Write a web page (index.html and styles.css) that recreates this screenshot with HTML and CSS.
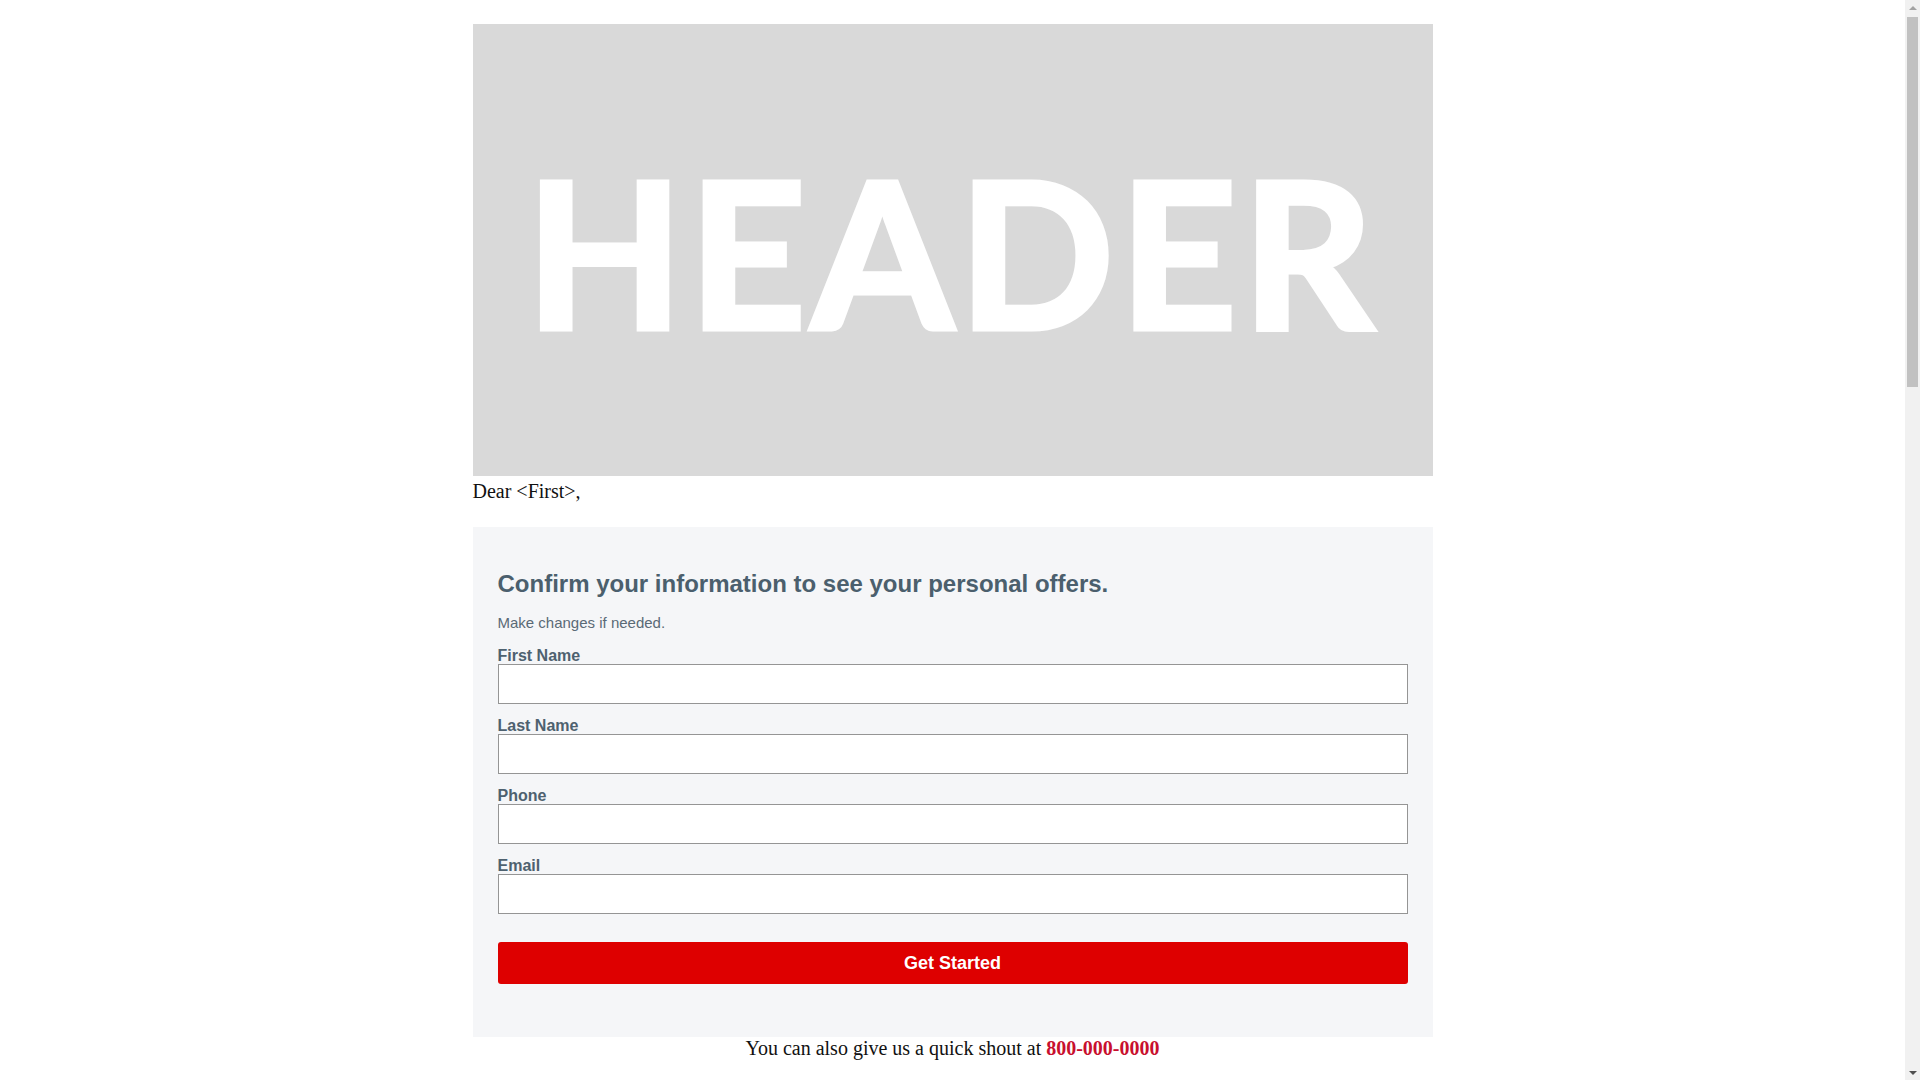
FILE: index.html
```html
<!DOCTYPE html>
<html lang="en">
<head>
<meta charset="utf-8">
<title>Confirm your information</title>
<link rel="stylesheet" href="styles.css">
</head>
<body>
<div class="page">
  <div class="header-img"><span class="header-word">HEADER</span></div>
  <p class="greeting">Dear &lt;First&gt;,</p>
  <form class="offer-form" onsubmit="return false;">
    <h2 class="form-title">Confirm your information to see your personal offers.</h2>
    <p class="form-sub">Make changes if needed.</p>
    <div class="field">
      <label class="field-label" for="fn">First Name</label>
      <input class="field-input" id="fn" type="text">
    </div>
    <div class="field">
      <label class="field-label" for="ln">Last Name</label>
      <input class="field-input" id="ln" type="text">
    </div>
    <div class="field">
      <label class="field-label" for="ph">Phone</label>
      <input class="field-input" id="ph" type="tel">
    </div>
    <div class="field">
      <label class="field-label" for="em">Email</label>
      <input class="field-input" id="em" type="email">
    </div>
    <button class="submit-btn" type="submit">Get Started</button>
  </form>
  <p class="call">You can also give us a quick shout at <strong class="call-phone">800-000-0000</strong></p>
</div>
<div class="scrollbar" aria-hidden="true">
  <div class="sb-arrow sb-up"></div>
  <div class="sb-track"><div class="sb-thumb"></div></div>
  <div class="sb-arrow sb-down"></div>
</div>
</body>
</html>
```
FILE: styles.css
```css
html, body {
  margin: 0;
  padding: 0;
  background: #ffffff;
}

body {
  font-family: "Liberation Serif", "Times New Roman", serif;
  color: #111111;
  padding-right: 15px;
}

.page {
  width: 960px;
  margin: 0 auto;
  padding-top: 24px;
  min-height: 3050px;
  box-sizing: border-box;
}

.header-img {
  height: 452px;
  background: #d9d9d9;
  display: flex;
  align-items: center;
  justify-content: center;
  padding-bottom: 1px;
  box-sizing: border-box;
  margin-bottom: 4px;
}

.header-word {
  font-family: Lato, "Liberation Sans", Arial, sans-serif;
  font-weight: 700;
  font-size: 204px;
  letter-spacing: 5.5px;
  color: #ffffff;
  -webkit-text-stroke: 5px #ffffff;
  line-height: normal;
}

.greeting {
  margin: 0 0 24px;
  font-size: 20px;
  line-height: 23px;
}

.offer-form {
  background: #f5f6f8;
  padding: 25px 25px 25px;
  display: flex;
  flex-direction: column;
  font-family: "Liberation Sans", Arial, sans-serif;
}

.form-title {
  margin: 18px 0 0;
  font-size: 24px;
  line-height: 28px;
  font-weight: 700;
  color: #4b5f6d;
}

.form-sub {
  margin: 16px 0 0;
  font-size: 15px;
  line-height: 17px;
  color: #5a6a76;
}

.field {
  display: flex;
  flex-direction: column;
  margin-top: 13px;
}

.form-sub + .field {
  margin-top: 16px;
}

.field-label {
  font-size: 16px;
  line-height: 17px;
  font-weight: 700;
  color: #4e616f;
}

.field-input {
  display: block;
  width: 100%;
  height: 40px;
  box-sizing: border-box;
  margin: 0;
  border: 1px solid #959595;
  border-radius: 0;
  background: #ffffff;
  font-family: "Liberation Sans", Arial, sans-serif;
  font-size: 16px;
  padding: 0 10px;
  outline: none;
}

.submit-btn {
  margin: 28px 0 28px;
  height: 42px;
  width: 100%;
  border: none;
  border-radius: 3px;
  background: #de0000;
  color: #ffffff;
  font-family: "Liberation Sans", Arial, sans-serif;
  font-size: 18px;
  font-weight: 700;
  cursor: pointer;
}

.call {
  margin: 0;
  text-align: center;
  font-size: 20px;
  line-height: 23px;
  color: #111111;
}

.call-phone {
  color: #c8102e;
  font-weight: 700;
}

/* browser scrollbar, drawn over the page edge */
.scrollbar {
  position: fixed;
  top: 0;
  right: 0;
  width: 15px;
  height: 100vh;
  background: #f1f1f1;
  display: flex;
  flex-direction: column;
}

.sb-arrow {
  height: 15px;
  flex: none;
  display: flex;
  align-items: center;
  justify-content: center;
}

.sb-up::before,
.sb-down::before {
  content: "";
  width: 0;
  height: 0;
  border-left: 4px solid transparent;
  border-right: 4px solid transparent;
}

.sb-up::before {
  border-bottom: 4px solid #a3a3a3;
}

.sb-down::before {
  border-top: 4px solid #505050;
}

.sb-track {
  flex: 1;
  padding: 2px 2px 0;
}

.sb-thumb {
  height: 370px;
  background: #c1c1c1;
  border-radius: 0;
}
```
